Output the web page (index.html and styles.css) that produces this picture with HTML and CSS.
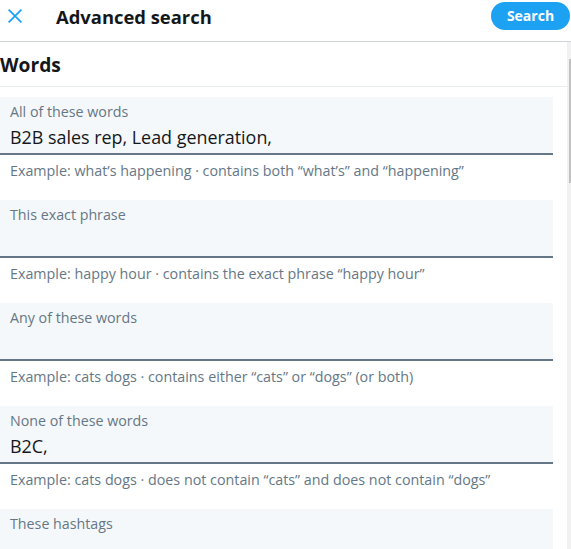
FILE: index.html
```html
<!DOCTYPE html>
<html lang="en">
<head>
<meta charset="utf-8">
<title>Advanced search</title>
<link rel="stylesheet" href="styles.css">
</head>
<body>
<div class="dialog">
  <header class="topbar">
    <button class="close" aria-label="Close">
      <svg viewBox="0 0 14 14" width="14" height="14"><path d="M0.6 0.6 L13.4 13.4 M13.4 0.6 L0.6 13.4" /></svg>
    </button>
    <h1 class="title">Advanced search</h1>
    <button class="search-btn">Search</button>
  </header>
  <div class="body">
    <div class="content">
      <section class="section">
        <h2 class="section-title">Words</h2>
        <div class="group">
          <label class="field"><span class="label">All of these words</span><span class="value">B2B sales rep, Lead generation,</span></label>
          <p class="hint">Example: what’s happening · contains both “what’s” and “happening”</p>
        </div>
        <div class="group">
          <label class="field"><span class="label">This exact phrase</span><span class="value"></span></label>
          <p class="hint">Example: happy hour · contains the exact phrase “happy hour”</p>
        </div>
        <div class="group">
          <label class="field"><span class="label">Any of these words</span><span class="value"></span></label>
          <p class="hint">Example: cats dogs · contains either “cats” or “dogs” (or both)</p>
        </div>
        <div class="group">
          <label class="field"><span class="label">None of these words</span><span class="value">B2C,</span></label>
          <p class="hint">Example: cats dogs · does not contain “cats” and does not contain “dogs”</p>
        </div>
        <div class="group">
          <label class="field"><span class="label">These hashtags</span><span class="value"></span></label>
        </div>
      </section>
    </div>
    <div class="scrollbar"><div class="thumb"></div></div>
  </div>
</div>
</body>
</html>
```
FILE: styles.css
```css
* { box-sizing: border-box; }
html, body { margin: 0; padding: 0; background: #fff; }
body {
  font-family: "Open Sans", "Noto Sans", sans-serif;
  color: #14171a;
  width: 571px;
  height: 549px;
  overflow: hidden;
}
.dialog { display: flex; flex-direction: column; height: 549px; }
.topbar {
  display: flex;
  align-items: center;
  height: 42px;
  padding-bottom: 9px;
  border-bottom: 1px solid #ccd6dd;
  flex: none;
}
.close {
  border: 0;
  background: none;
  padding: 0;
  margin-left: 8px;
  width: 14px;
  height: 14px;
  display: flex;
}
.close svg path { stroke: #1da1f2; stroke-width: 1.8; fill: none; }
.title {
  margin: 2px 0 0 34px;
  font-size: 18.4px;
  font-weight: 700;
  line-height: 24px;
  color: #14171a;
}
.search-btn {
  margin-left: auto;
  margin-right: 1px;
  width: 79px;
  height: 28px;
  border: 0;
  border-radius: 14px;
  background: #1da1f2;
  color: #fff;
  font-family: inherit;
  font-size: 14px;
  font-weight: 700;
  padding: 0 0 1px;
}
.body { display: flex; flex: 1; min-height: 0; }
.content { flex: 1; overflow: hidden; }
.scrollbar {
  width: 4px;
  flex: none;
  background: #f1f1f1;
  padding-top: 17px;
}
.thumb { height: 124px; margin-left: 2px; background: #c1c1c1; }
.section-title {
  margin: 0;
  padding: 11px 0 9px;
  font-size: 19.2px;
  line-height: 24px;
  font-weight: 700;
  border-bottom: 1px solid #e6ecf0;
}
.group { margin-right: 14px; padding-top: 10px; }
.group + .group { padding-top: 19px; }
.field {
  display: flex;
  flex-direction: column;
  height: 58px;
  padding: 5px 10px 0;
  background: #f5f8fa;
  border-bottom: 2px solid #657786;
}
.label { font-size: 14.25px; line-height: 20px; color: #657786; }
.value { margin-top: 3px; font-size: 17.9px; line-height: 24px; color: #14171a; white-space: nowrap; }
.hint {
  margin: 0;
  padding: 6px 0 0 10px;
  font-size: 14.3px;
  line-height: 20px;
  color: #657786;
  white-space: nowrap;
}
```
